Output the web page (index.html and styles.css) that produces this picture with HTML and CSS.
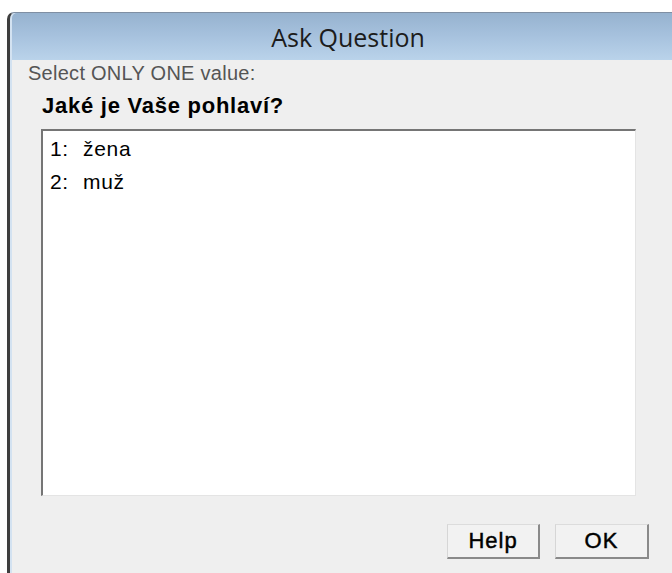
FILE: index.html
```html
<!DOCTYPE html>
<html lang="cs">
<head>
<meta charset="utf-8">
<title>Ask Question</title>
<link rel="stylesheet" href="styles.css">
</head>
<body>
  <div class="window">
    <div class="titlebar">Ask Question</div>
    <div class="content">
      <div class="prompt">Select ONLY ONE value:</div>
      <div class="question">Jaké je Vaše pohlaví?</div>
      <ul class="listbox">
        <li class="option"><span class="num">1:</span><span class="label">žena</span></li>
        <li class="option"><span class="num">2:</span><span class="label">muž</span></li>
      </ul>
      <div class="buttons">
        <button class="btn btn-help" type="button">Help</button>
        <button class="btn btn-ok" type="button">OK</button>
      </div>
    </div>
  </div>
</body>
</html>
```
FILE: styles.css
```css
html, body {
  margin: 0;
  padding: 0;
  height: 100%;
  overflow: hidden;
  background: #ffffff;
}

/* Dialog frame: dark outer edge on the left, thin light inner edge */
.window {
  margin: 12px 0 0 7px;
  min-height: calc(100vh - 12px);
  box-sizing: border-box;
  display: flex;
  flex-direction: column;
  border-top: 1px solid #7f8fa3;
  border-left: 3px solid #3e3e3e;
  border-top-left-radius: 7px;
  padding-left: 2px;
  background: #d3e2f1;
}

.titlebar {
  height: 47px;
  box-sizing: border-box;
  padding: 1px 0 0 12px;
  line-height: 46px;
  text-align: center;
  font-family: "Open Sans", "Noto Sans", sans-serif;
  font-size: 25px;
  color: #1c1c1c;
  background: linear-gradient(to bottom, #96b2cf 0%, #a7c2de 50%, #bad3ea 100%);
  border-top-left-radius: 5px;
}

.content {
  flex: 1;
  display: flex;
  flex-direction: column;
  background: #efefef;
  font-family: "Liberation Sans", Arial, sans-serif;
}

.prompt {
  margin: 1px 0 0 16px;
  font-size: 20px;
  line-height: 24px;
  letter-spacing: 0.27px;
  color: #555555;
}

.question {
  margin: 8px 0 0 30px;
  font-size: 22px;
  line-height: 26px;
  font-weight: bold;
  letter-spacing: 0.75px;
  color: #000000;
}

/* Sunken list of answers */
.listbox {
  list-style: none;
  margin: 10px 0 0 29px;
  padding: 1px 0 0 7px;
  width: 595px;
  height: 367px;
  box-sizing: border-box;
  background: #ffffff;
  border-top: 2px solid #757575;
  border-left: 2px solid #757575;
  border-right: 1px solid #e4e4e4;
  border-bottom: 1px solid #e4e4e4;
}

.option {
  display: flex;
  font-size: 21px;
  line-height: 33px;
  color: #000000;
}

.num {
  width: 33px;
  letter-spacing: 0.5px;
}

.label {
  letter-spacing: 0.7px;
}

.buttons {
  display: flex;
  justify-content: flex-end;
  gap: 15px;
  margin-top: 28px;
  padding-right: 23px;
}

/* Raised push buttons with a medium-weight caption */
.btn {
  height: 35px;
  box-sizing: border-box;
  padding: 0;
  font-family: "Liberation Sans", Arial, sans-serif;
  font-size: 22px;
  letter-spacing: 1px;
  -webkit-text-stroke: 0.45px #000000;
  color: #000000;
  background: #f2f2f2;
  border-top: 1px solid #dcdcdc;
  border-left: 1px solid #d6d6d6;
  border-right: 2px solid #8a8a8a;
  border-bottom: 2px solid #8a8a8a;
  border-radius: 0;
}

.btn-help {
  width: 93px;
}

.btn-ok {
  width: 94px;
}
```
